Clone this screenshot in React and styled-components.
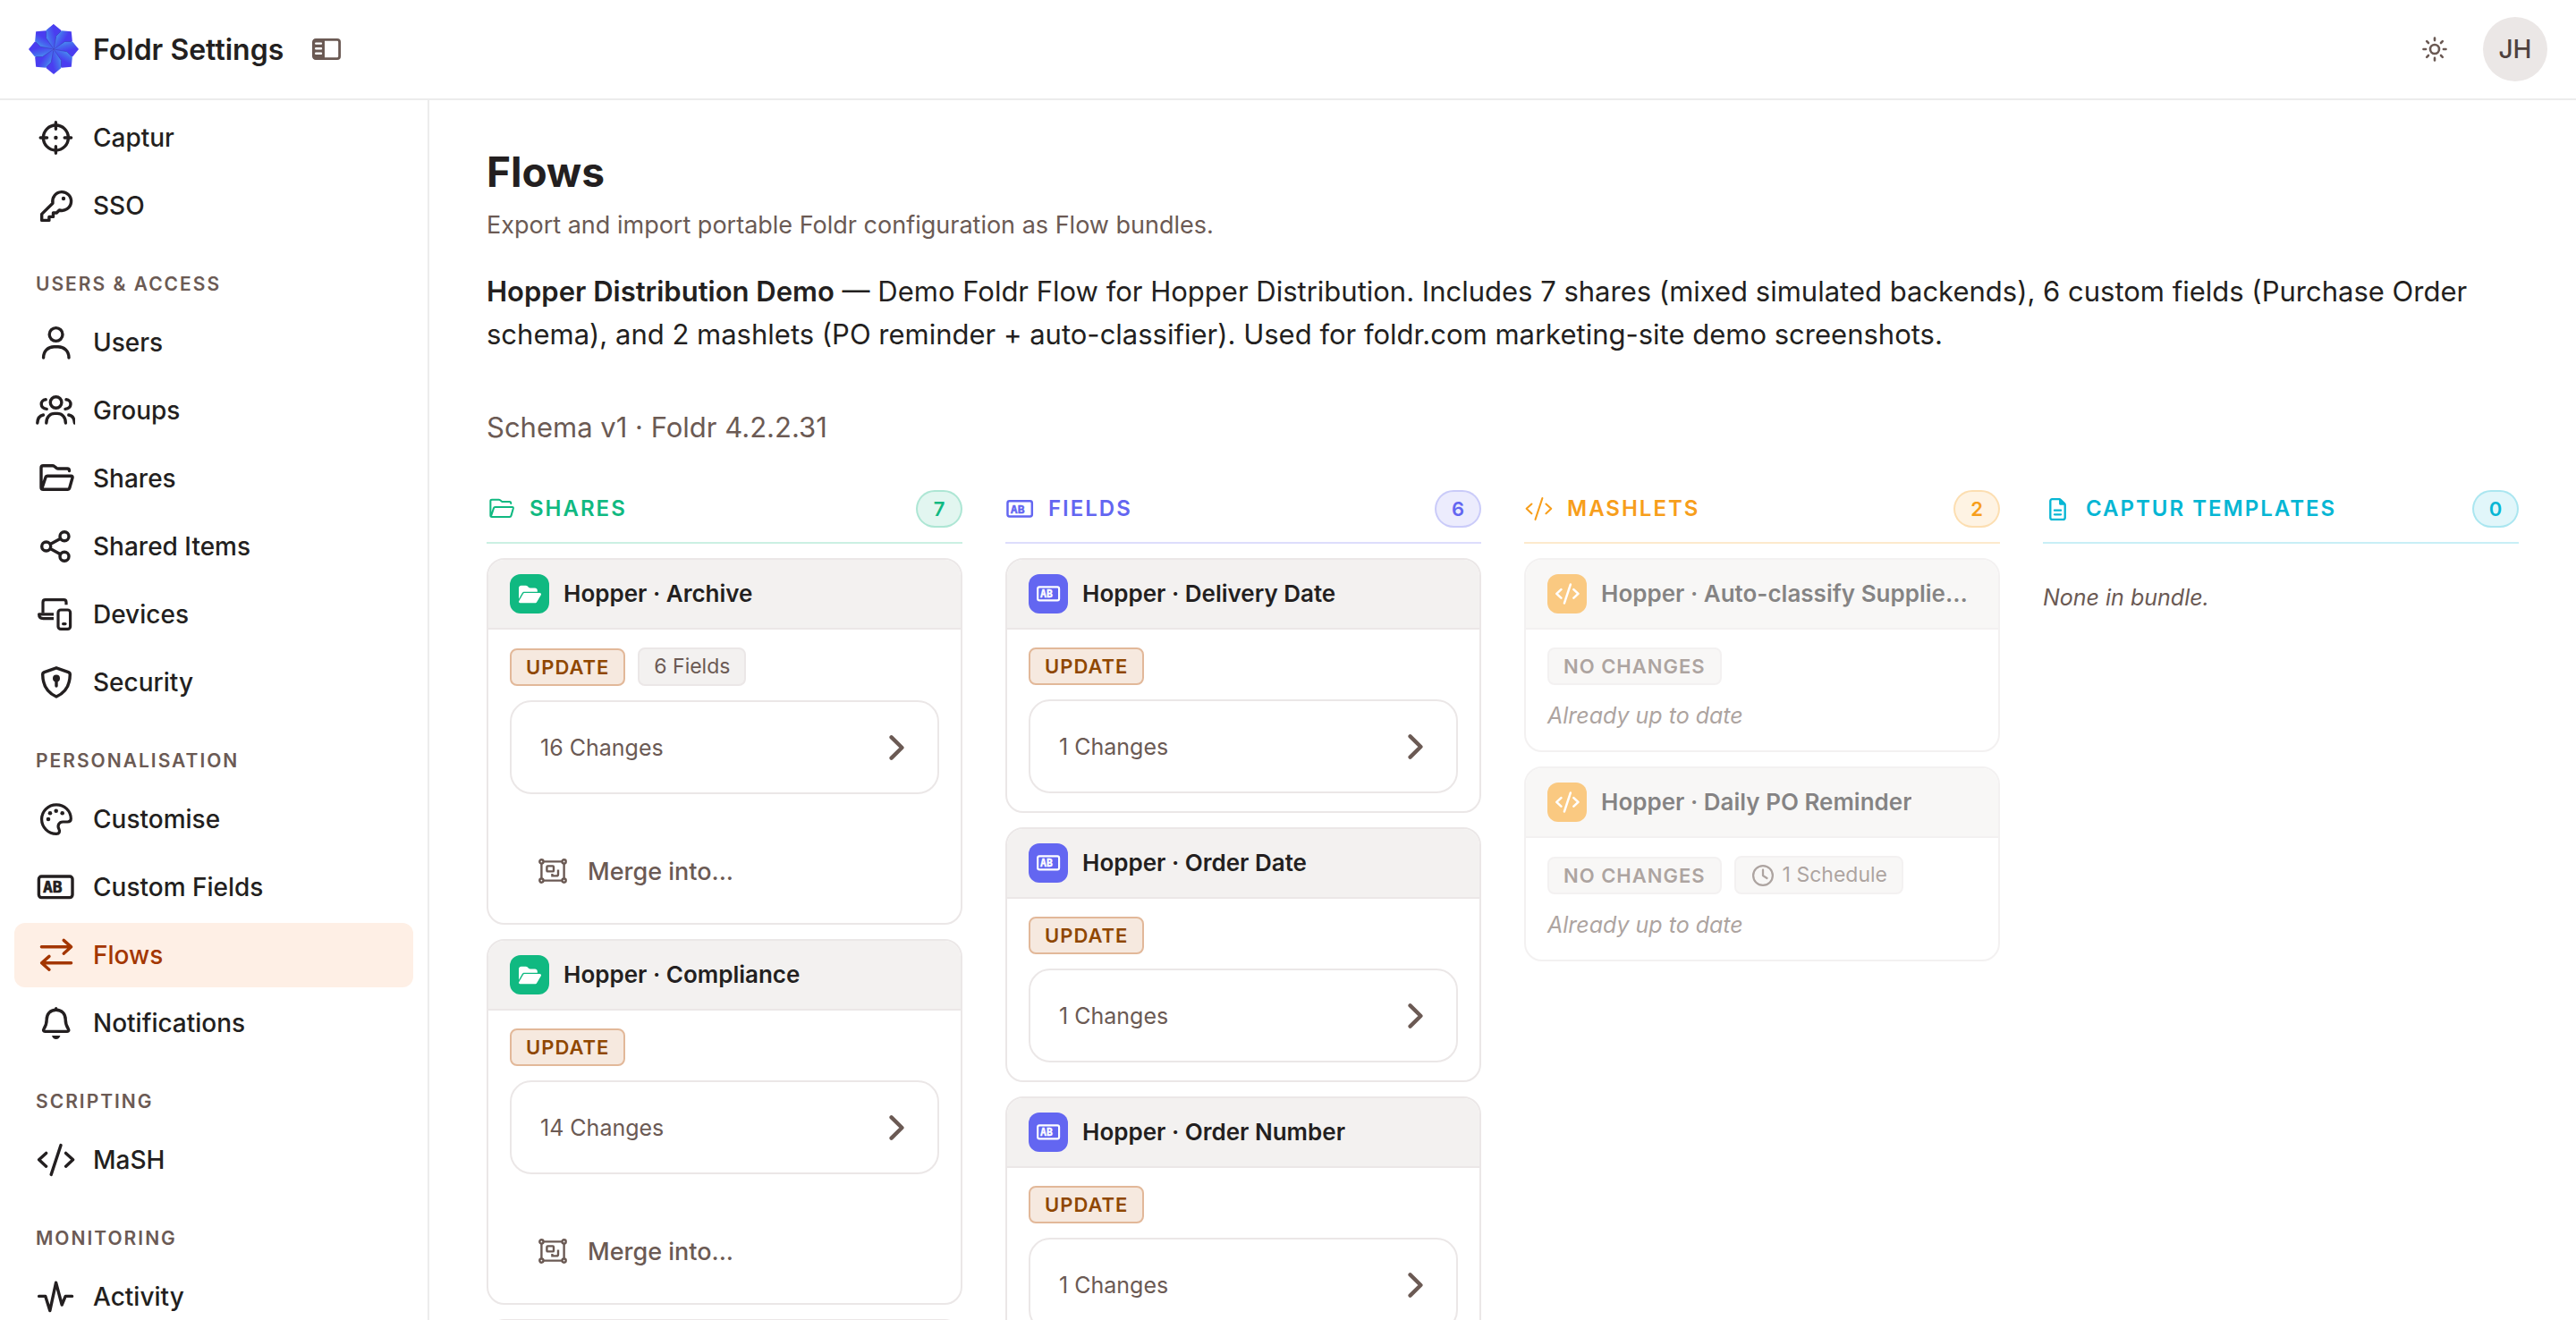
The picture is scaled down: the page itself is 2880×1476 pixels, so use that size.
import React from "react";
import styled, { createGlobalStyle } from "styled-components";
import { FaFolderOpen, FaRegFileLines, FaRegClock } from "react-icons/fa6";

const color = {
  ink: "#231f20",
  muted: "#6b5a54",
  line: "#ebe7e7",
  rule: "#ececec",
  surface: "#f3f1f0",
  accent: "#a33600",
  accentSoft: "#feefe5",
  green: "#10b981",
  indigo: "#6366f1",
  amber: "#f79e1b",
  cyan: "#06b6d4",
};

const GlobalStyle = createGlobalStyle`
  *, *::before, *::after { box-sizing: border-box; }
  body {
    margin: 0;
    background: #fff;
    color: ${color.ink};
    font-family: Inter, "Liberation Sans", sans-serif;
    font-size: 28px;
    -webkit-font-smoothing: antialiased;
  }
  button { font: inherit; color: inherit; background: none; border: 0; padding: 0; cursor: pointer; }
  h1, h2, h3, p, ul { margin: 0; padding: 0; }
  ul { list-style: none; }
  svg { display: block; flex-shrink: 0; }
`;

/* ---------- icons ---------- */

const Icon = ({ size = 44, width = 3.4, children }) => (
  <svg
    width={size}
    height={size}
    viewBox="0 0 44 44"
    fill="none"
    stroke="currentColor"
    strokeWidth={width}
    strokeLinecap="round"
    strokeLinejoin="round"
    aria-hidden="true"
  >
    {children}
  </svg>
);

const CrosshairIcon = () => (
  <Icon>
    <circle cx="22.4" cy="22" r="14" />
    <path d="M22.4 4.8v7.4M22.4 31.8v7.4M5.2 22h7.4M32.2 22h7.4" />
    <circle cx="22.4" cy="22" r="2.2" fill="currentColor" stroke="none" />
  </Icon>
);

const KeyIcon = () => (
  <Icon>
    <path d="M19 19.2 6.7 31.4v7h8.2v-4h4.6v-4.4h3.8l3-3A10.4 10.4 0 1 0 19 19.2Z" />
    <circle cx="31" cy="14" r="2.2" fill="currentColor" stroke="none" />
  </Icon>
);

const UserIcon = () => (
  <Icon>
    <circle cx="22.6" cy="13" r="7.4" />
    <path d="M8.6 39c0-7.6 5.400-12.200 11.800-12.200h4.600c6.400 0 12 4.600 12 12.200" />
  </Icon>
);

const GroupIcon = () => (
  <Icon>
    <circle cx="22.6" cy="13" r="6.3" />
    <path d="M11.800 36c0-7 4.400-10.600 9.200-10.600h3.200c4.800 0 9.200 3.600 9.200 10.600" />
    <path d="M11.200 9.800c-6.800.6-6.800 10 1 10.600M34 9.800c6.800.6 6.800 10-1 10.600" />
    <path d="M1.800 36c.2-4.600 2.600-8.200 6.600-9M43.400 36c-.2-4.600-2.600-8.200-6.600-9" />
  </Icon>
);

const FolderIcon = ({ size, width }) => (
  <Icon size={size} width={width}>
    <path d="M37.500 13.600c0-1.600-.6-2.600-2.200-2.600H25q-1 0-1.800-.6l-2.400-1.900q-.9-.7-2-.7H8.200Q6 7.800 6 10v22q0 2.300 2.200 2.300h27.200q1.900 0 2.400-1.800l3.200-11.200q.5-2.100-1.600-2.100H13.200q-1.700 0-2.200 1.600L6.800 33.400" />
  </Icon>
);

const ShareIcon = () => (
  <Icon>
    <circle cx="11.7" cy="22" r="5" />
    <circle cx="32" cy="10.7" r="5" />
    <circle cx="32" cy="33.3" r="5" />
    <path d="m16.200 19.500 11.400-6.300M16.200 24.500l11.400 6.300" />
  </Icon>
);

const DevicesIcon = () => (
  <Icon width={3.2}>
    <path d="M8 20.500v-12q0-2.800 2.800-2.800h20.400q2.800 0 2.800 2.800v2.800" strokeLinecap="butt" />
    <path d="M20 21.800H3.600c0 3 1.800 4.800 4.800 4.800H20" strokeLinecap="butt" />
    <rect x="25" y="17" width="13.6" height="21.4" rx="3" />
    <path d="M30.600 32.600h2.400" />
  </Icon>
);

const ShieldIcon = () => (
  <Icon>
    <path d="m23 5.800 13.500 4.900q1.800.7 1.800 2.600C38.200 25 33 33.600 23 38 13 33.600 7.800 25 7.700 13.300q0-1.900 1.800-2.600Z" />
    <circle cx="23" cy="17.6" r="4" fill="currentColor" stroke="none" />
    <path d="M23 18v8" />
  </Icon>
);

const PaletteIcon = () => (
  <Icon width={3.2}>
    <path d="M39.300 21.600c0-9-7.300-15.800-16.300-15.800C13.800 5.800 6.600 13 6.600 22S13.800 38.300 23 38.300c3.400 0 4.300-2.600 2.900-5.200-2.100-4 .1-8.100 4.300-8.100h5.300c2.500 0 3.800-1.200 3.800-3.400Z" />
    <g fill="currentColor" stroke="none">
      <circle cx="14" cy="22" r="2.3" />
      <circle cx="16" cy="15.2" r="2.3" />
      <circle cx="22.7" cy="12.8" r="2.3" />
      <circle cx="29.7" cy="15.2" r="2.3" />
    </g>
  </Icon>
);

const IconLetters = styled.text`
  font-family: "DejaVu Sans Mono", monospace;
  font-size: 18px;
  font-weight: 700;
  fill: currentColor;
  stroke: currentColor;
  stroke-width: 0.6;
`;

const FieldIcon = ({ size }) => (
  <Icon size={size}>
    <rect x="3.4" y="10" width="37.6" height="23.6" rx="3" />
    <IconLetters x="8" y="28.4">AB</IconLetters>
  </Icon>
);

const SwapIcon = () => (
  <Icon>
    <path d="M6.400 12.800h33M31.200 5.400l8.400 7.400-8.400 7.400M39.600 30.800h-33M15 23.400l-8.400 7.400 8.400 7.400" />
  </Icon>
);

const BellIcon = () => (
  <Icon>
    <path d="M22.700 5.600v1.600C16 7.200 12.200 12 12.200 18c0 5.600-1.400 7.800-3.200 10.600-1 1.600-.2 2.800 1.200 2.800h25c1.400 0 2.200-1.200 1.200-2.800-1.800-2.800-3.200-5-3.200-10.600 0-6-3.800-10.800-10.500-10.800" />
    <path d="M18 36h9.400q-1.200 4-4.700 4T18 36Z" fill="currentColor" stroke="none" />
  </Icon>
);

const CodeIcon = ({ size, width }) => (
  <Icon size={size} width={width}>
    <path d="M28 5.600 17.200 38.400M11.600 14.400l-8 7.400 8 7.400M33.600 14.400l8 7.400-8 7.400" />
  </Icon>
);

const PulseIcon = () => (
  <Icon>
    <path d="M3.600 21.400h7.200l5 16.200 6.800-31.400L29.200 31l4-9.600h7.400" />
  </Icon>
);

const SunIcon = () => (
  <svg width="28" height="28" viewBox="0 0 28 28" fill="none" stroke="currentColor" strokeWidth="2.6" strokeLinecap="round" aria-hidden="true">
    <circle cx="14" cy="14" r="5" />
    <path d="M14 1.500v2.600M14 23.900v2.600M1.500 14h2.600M23.900 14h2.600M5.200 5.200 7 7M21 21l1.800 1.800M5.200 22.800 7 21M21 7l1.800-1.800" />
  </svg>
);

const PanelIcon = () => (
  <svg width="32" height="24" viewBox="0 0 32 24" aria-hidden="true">
    <rect x="1.4" y="1.4" width="29.2" height="21.2" rx="2.6" fill="none" stroke="currentColor" strokeWidth="2.8" />
    <rect x="1.4" y="1.4" width="12.6" height="21.2" fill="currentColor" />
    <path d="M4.200 5.600h5.800M4.200 11.200h5.800M4.200 16.800h5.800" stroke="#fff" strokeWidth="2.4" strokeLinecap="round" />
  </svg>
);

const ChevronIcon = () => (
  <svg width="17" height="28" viewBox="0 0 17 28" fill="none" stroke="currentColor" strokeWidth="4.4" strokeLinecap="round" strokeLinejoin="round" aria-hidden="true">
    <path d="m2.600 2.400 11.800 11.600L2.600 25.600" />
  </svg>
);

const MergeIcon = () => (
  <svg width="32" height="28" viewBox="0 0 32 28" fill="none" stroke="currentColor" strokeWidth="2.4" aria-hidden="true">
    <path d="M6 3.400h20M6 24.600h20M3.400 6v16M28.600 6v16" />
    <circle cx="3.4" cy="3.4" r="2.1" />
    <circle cx="28.6" cy="3.4" r="2.1" />
    <circle cx="3.4" cy="24.6" r="2.1" />
    <circle cx="28.6" cy="24.6" r="2.1" />
    <rect x="9.4" y="8.4" width="7.6" height="6" rx="1" />
    <path d="M22 12.600v5.200q0 1.600-1.600 1.600h-5V17" />
  </svg>
);

const petals = [0, 45, 90, 135, 180, 225, 270, 315];

const Logo = () => (
  <svg width="56" height="56" viewBox="-28 -28 56 56" aria-hidden="true">
    <defs>
      <linearGradient id="fold" gradientUnits="userSpaceOnUse" x1="-9" y1="-12" x2="2" y2="-15">
        <stop offset="0" stopColor="#4a92f2" />
        <stop offset="0.45" stopColor="#4668ee" />
        <stop offset="1" stopColor="#4a3df0" />
      </linearGradient>
    </defs>
    {petals.map((angle) => (
      <g key={angle} transform={`rotate(${angle})`}>
        <path d="M0 0-8.500-12.500V-21L0-28 8.500-21Z" fill="url(#fold)" />
        <path d="M0 0-8.500-12.500V-20" fill="none" stroke="#3531b4" strokeOpacity="0.55" strokeWidth="0.9" />
      </g>
    ))}
    <path d="M0 0-8.500-12.500V-21L0-28Z" fill="url(#fold)" />
    <path d="M0 0-8.500-12.500V-20" fill="none" stroke="#3531b4" strokeOpacity="0.55" strokeWidth="0.9" />
  </svg>
);

/* ---------- shell ---------- */

const Shell = styled.div`
  display: flex;
  flex-direction: column;
  height: 100vh;
  overflow: hidden;
`;

const TopBar = styled.header`
  display: flex;
  align-items: center;
  justify-content: space-between;
  flex-shrink: 0;
  height: 112px;
  padding: 0 32px;
  border-bottom: 2px solid ${color.rule};
`;

const TopGroup = styled.div`
  display: flex;
  align-items: center;
  gap: ${(p) => p.$gap}px;
  color: ${color.muted};
`;

const Brand = styled.a`
  display: flex;
  align-items: center;
  gap: 16px;
  color: ${color.ink};
  font-size: 32px;
  font-weight: 600;
  text-decoration: none;
`;

const Avatar = styled.button`
  display: grid;
  place-items: center;
  width: 72px;
  height: 72px;
  && {
    border-radius: 50%;
    background: #ebe7e6;
    color: #4d413e;
    font-weight: 500;
  }
`;

const Body = styled.div`
  display: flex;
  flex: 1;
  min-height: 0;
`;

const Sidebar = styled.nav`
  flex: 0 0 480px;
  padding: 6px 16px;
  border-right: 2px solid ${color.rule};
  overflow: hidden;
`;

const NavHeading = styled.h2`
  padding: 40px 24px 17px;
  color: ${color.muted};
  font-size: 21px;
  line-height: 24px;
  font-weight: 600;
  letter-spacing: 2px;
  text-transform: uppercase;
`;

const NavList = styled.ul`
  display: flex;
  flex-direction: column;
  gap: 4px;
`;

const NavLink = styled.a`
  display: flex;
  align-items: center;
  gap: 20px;
  height: 72px;
  padding: 0 24px;
  border-radius: 12px;
  background: ${(p) => (p.$active ? color.accentSoft : "transparent")};
  color: ${(p) => (p.$active ? color.accent : color.ink)};
  font-weight: 500;
  text-decoration: none;
`;

const IconSlot = styled.span`
  display: grid;
  place-items: center;
  width: ${(p) => p.$size}px;
  height: ${(p) => p.$size}px;
  flex-shrink: 0;
`;

/* ---------- page ---------- */

const Main = styled.main`
  flex: 1;
  min-width: 0;
  padding: 48px 64px;
  overflow: hidden;
`;

const PageTitle = styled.h1`
  font-size: 46px;
  line-height: 64px;
  font-weight: 700;
`;

const PageLead = styled.p`
  margin-top: 8px;
  color: ${color.muted};
  font-size: 27px;
  line-height: 40px;
`;

const Summary = styled.p`
  margin-top: 30px;
  font-size: 31px;
  line-height: 48px;
  strong { font-weight: 600; }
`;

const Version = styled.p`
  margin: 56px 0 46px;
  color: ${color.muted};
  font-size: 31px;
  line-height: 48px;
`;

const Board = styled.div`
  display: grid;
  grid-template-columns: repeat(4, minmax(0, 1fr));
  align-items: start;
  gap: 48px;
`;

const Column = styled.section`
  display: flex;
  flex-direction: column;
  gap: 16px;
`;

const ColumnHeader = styled.header`
  display: flex;
  align-items: center;
  gap: 16px;
  padding-bottom: 16px;
  border-bottom: 2px solid ${(p) => p.$color}38;
  color: ${(p) => p.$color};
`;

const ColumnTitle = styled.h2`
  flex: 1;
  font-size: 24px;
  line-height: 32px;
  font-weight: 600;
  letter-spacing: 2px;
  text-transform: uppercase;
`;

const Count = styled.span`
  display: grid;
  place-items: center;
  min-width: 52px;
  height: 42px;
  border: 2px solid ${(p) => p.$color}40;
  border-radius: 21px;
  background: ${(p) => p.$color}1f;
  font-size: 22px;
  font-weight: 600;
`;

const Card = styled.article`
  border: 2px solid ${color.line};
  border-radius: 20px;
  background: #fff;
  overflow: hidden;
  opacity: ${(p) => (p.$dim ? 0.55 : 1)};
`;

const CardHeader = styled.header`
  display: flex;
  align-items: center;
  gap: 16px;
  padding: 16px 24px;
  border-bottom: 2px solid ${color.line};
  background: ${color.surface};
`;

const Tile = styled.span`
  display: grid;
  place-items: center;
  width: 44px;
  height: 44px;
  flex-shrink: 0;
  border-radius: 12px;
  background: ${(p) => p.$color};
  color: #fff;
`;

const CardTitle = styled.h3`
  min-width: 0;
  font-size: 26px;
  line-height: 36px;
  font-weight: 600;
  white-space: nowrap;
  overflow: hidden;
  text-overflow: ellipsis;
`;

const CardBody = styled.div`
  padding: 20px 24px;
`;

const Tags = styled.div`
  display: flex;
  align-items: center;
  gap: 14px;
  margin-bottom: 16px;
`;

const Status = styled.span`
  padding: 0 16px;
  border: 2px solid ${(p) => (p.$update ? "#e2b899" : color.line)};
  border-radius: 8px;
  background: ${(p) => (p.$update ? "#f6e9df" : color.surface)};
  color: ${(p) => (p.$update ? "#8f4700" : color.muted)};
  font-size: 22px;
  line-height: 38px;
  font-weight: 600;
  letter-spacing: 1px;
  text-transform: uppercase;
`;

const Chip = styled.span`
  display: flex;
  align-items: center;
  gap: 8px;
  padding: 0 16px;
  border: 2px solid ${color.line};
  border-radius: 8px;
  background: ${color.surface};
  color: ${color.muted};
  font-size: 23px;
  line-height: 39px;
`;

const Changes = styled.button`
  && {
    display: flex;
    align-items: center;
    justify-content: space-between;
    width: 100%;
    height: 105px;
    padding: 0 37px 0 32px;
    border: 2px solid ${color.line};
    border-radius: 24px;
    color: ${color.muted};
    font-size: 25px;
  }
`;

const Merge = styled.button`
  && {
    display: flex;
    align-items: center;
    gap: 23px;
    height: 76px;
    margin-top: 48px;
    padding: 0 32px;
    color: ${color.muted};
    font-size: 27px;
    font-weight: 500;
  }
`;

const UpToDate = styled.p`
  color: ${color.muted};
  font-size: 25px;
  line-height: 37px;
  font-style: italic;
`;

const Empty = styled.p`
  padding: 24px 0;
  color: ${color.muted};
  font-size: 25px;
  line-height: 40px;
  font-style: italic;
`;

/* ---------- data ---------- */

const nav = [
  {
    items: [
      { label: "Captur", icon: <CrosshairIcon /> },
      { label: "SSO", icon: <KeyIcon /> },
    ],
  },
  {
    title: "Users & Access",
    items: [
      { label: "Users", icon: <UserIcon /> },
      { label: "Groups", icon: <GroupIcon /> },
      { label: "Shares", icon: <FolderIcon /> },
      { label: "Shared Items", icon: <ShareIcon /> },
      { label: "Devices", icon: <DevicesIcon /> },
      { label: "Security", icon: <ShieldIcon /> },
    ],
  },
  {
    title: "Personalisation",
    items: [
      { label: "Customise", icon: <PaletteIcon /> },
      { label: "Custom Fields", icon: <FieldIcon /> },
      { label: "Flows", icon: <SwapIcon />, active: true },
      { label: "Notifications", icon: <BellIcon /> },
    ],
  },
  { title: "Scripting", items: [{ label: "MaSH", icon: <CodeIcon /> }] },
  { title: "Monitoring", items: [{ label: "Activity", icon: <PulseIcon /> }] },
];

const columns = [
  {
    title: "Shares",
    count: 7,
    color: color.green,
    icon: <FolderIcon size={32} width={2.8} />,
    tile: <FaFolderOpen size={25} />,
    cards: [
      { title: "Hopper · Archive", update: true, chip: "6 Fields", changes: 16, merge: true },
      { title: "Hopper · Compliance", update: true, changes: 14, merge: true },
      { loading: true },
    ],
  },
  {
    title: "Fields",
    count: 6,
    color: color.indigo,
    icon: <FieldIcon size={32} />,
    tile: <FieldIcon size={28} />,
    cards: [
      { title: "Hopper · Delivery Date", update: true, changes: 1 },
      { title: "Hopper · Order Date", update: true, changes: 1 },
      { title: "Hopper · Order Number", update: true, changes: 1 },
    ],
  },
  {
    title: "Mashlets",
    count: 2,
    color: color.amber,
    icon: <CodeIcon size={32} width={2.8} />,
    tile: <CodeIcon size={28} width={4} />,
    cards: [
      { title: "Hopper · Auto-classify Supplier Invoices" },
      { title: "Hopper · Daily PO Reminder", chip: "1 Schedule", clock: true },
    ],
  },
  { title: "Captur Templates", count: 0, color: color.cyan, icon: <FaRegFileLines size={25} />, cards: [] },
];

const LoadingCard = ({ column }) => (
  <Card>
    <CardHeader>
      <Tile $color={column.color}>{column.tile}</Tile>
    </CardHeader>
  </Card>
);

const FlowCard = ({ column, card }) => (
  <Card $dim={!card.update}>
    <CardHeader>
      <Tile $color={column.color}>{column.tile}</Tile>
      <CardTitle>{card.title}</CardTitle>
    </CardHeader>
    <CardBody>
      <Tags>
        <Status $update={card.update}>{card.update ? "Update" : "No changes"}</Status>
        {card.chip && (
          <Chip>
            {card.clock && (
              <IconSlot $size={28}>
                <FaRegClock size={24} />
              </IconSlot>
            )}
            {card.chip}
          </Chip>
        )}
      </Tags>
      {card.changes && (
        <Changes type="button">
          {card.changes} Changes
          <ChevronIcon />
        </Changes>
      )}
      {card.merge && (
        <Merge type="button">
          <MergeIcon />
          Merge into...
        </Merge>
      )}
      {!card.update && <UpToDate>Already up to date</UpToDate>}
    </CardBody>
  </Card>
);

export default function App() {
  return (
    <Shell>
      <GlobalStyle />
      <TopBar>
        <TopGroup $gap={32}>
          <Brand href="#">
            <Logo />
            Foldr Settings
          </Brand>
          <button type="button" aria-label="Toggle sidebar">
            <PanelIcon />
          </button>
        </TopGroup>
        <TopGroup $gap={40}>
          <button type="button" aria-label="Switch theme">
            <SunIcon />
          </button>
          <Avatar type="button">JH</Avatar>
        </TopGroup>
      </TopBar>
      <Body>
        <Sidebar>
          {nav.map((group, i) => (
            <React.Fragment key={i}>
              {group.title && <NavHeading>{group.title}</NavHeading>}
              <NavList>
                {group.items.map((item) => (
                  <li key={item.label}>
                    <NavLink href="#" $active={item.active}>
                      <IconSlot $size={44}>{item.icon}</IconSlot>
                      {item.label}
                    </NavLink>
                  </li>
                ))}
              </NavList>
            </React.Fragment>
          ))}
        </Sidebar>
        <Main>
          <PageTitle>Flows</PageTitle>
          <PageLead>Export and import portable Foldr configuration as Flow bundles.</PageLead>
          <Summary>
            <strong>Hopper Distribution Demo</strong> — Demo Foldr Flow for Hopper Distribution. Includes 7 shares
            (mixed simulated backends), 6 custom fields (Purchase Order schema), and 2 mashlets (PO reminder +
            auto-classifier). Used for foldr.com marketing-site demo screenshots.
          </Summary>
          <Version>Schema v1 · Foldr 4.2.2.31</Version>
          <Board>
            {columns.map((column) => (
              <Column key={column.title}>
                <ColumnHeader $color={column.color}>
                  <IconSlot $size={32}>{column.icon}</IconSlot>
                  <ColumnTitle>{column.title}</ColumnTitle>
                  <Count $color={column.color}>{column.count}</Count>
                </ColumnHeader>
                {column.cards.map((card, i) =>
                  card.loading ? (
                    <LoadingCard key={i} column={column} />
                  ) : (
                    <FlowCard key={i} column={column} card={card} />
                  )
                )}
                {column.cards.length === 0 && <Empty>None in bundle.</Empty>}
              </Column>
            ))}
          </Board>
        </Main>
      </Body>
    </Shell>
  );
}
